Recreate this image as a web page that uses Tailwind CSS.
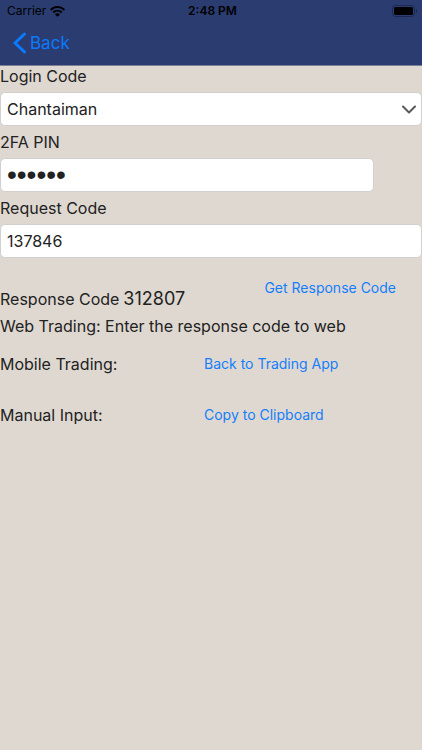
<!DOCTYPE html>
<html lang="en">
<head>
<meta charset="utf-8">
<meta name="viewport" content="width=device-width, initial-scale=1">
<title>Response Code</title>
<script src="https://cdn.jsdelivr.net/npm/@tailwindcss/browser@4"></script>
</head>
<body class="min-h-screen bg-[#dfd8d1] font-['Inter',sans-serif] text-base leading-5 text-[#222222]">
<header class="border-b border-[#7a7f98] bg-[#2a3c70]">
  <div class="grid h-[22px] grid-cols-3 items-center pr-1 pl-[7px] text-xs text-black">
    <div class="flex items-center gap-1">
      <span>Carrier</span>
      <svg class="h-[11px] w-[15px]" viewBox="0 0 15 11" fill="currentColor" aria-hidden="true">
        <path d="M7.5 0C4.7 0 2.1 1.1.2 2.9c-.2.2-.2.4 0 .6l.9.9c.2.2.4.2.6 0A8.300 8.300 0 0 1 7.500 2.100c2.200 0 4.200.8 5.800 2.300.2.200.4.200.6 0l.9-.9c.2-.2.2-.4 0-.6A10.600 10.600 0 0 0 7.500 0z"/>
        <path d="M7.500 3.700c-1.800 0-3.500.7-4.700 1.800-.2.200-.2.400 0 .6l.9.9c.2.200.4.200.6 0a4.700 4.700 0 0 1 6.400 0c.2.200.4.200.6 0l.9-.9c.2-.2.2-.4 0-.6a7 7 0 0 0-4.700-1.800z"/>
        <path d="M7.500 7.300c-.8 0-1.600.3-2.200.8-.2.200-.2.400 0 .6l1.900 1.900c.2.200.4.200.6 0l1.900-1.900c.2-.2.2-.4 0-.6-.6-.5-1.400-.8-2.200-.8z"/>
      </svg>
    </div>
    <time class="text-center font-semibold">2:48 PM</time>
    <svg class="h-3 w-[26px] justify-self-end" viewBox="0 0 26 12" aria-label="Battery full" role="img">
      <rect x=".5" y=".5" width="22" height="11" rx="3" fill="none" stroke="#1c2850"/>
      <rect x="2" y="2" width="19" height="8" rx="1.500" fill="#000"/>
      <path d="M24 4v4c.8-.3 1.300-1.100 1.300-2S24.800 4.300 24 4z" fill="#1c2850"/>
    </svg>
  </div>
  <nav class="flex h-[43px] items-center pb-0.5 pl-3">
    <a href="#" class="flex items-center gap-1 text-[17px] text-[#0a7aff]">
      <svg class="h-[22px] w-[14px]" viewBox="0 0 14 22" fill="none" stroke="currentColor" stroke-width="3" stroke-linecap="round" stroke-linejoin="round" aria-hidden="true"><path d="M12.500 2 3 11l9.500 9"/></svg>
      <span>Back</span>
    </a>
  </nav>
</header>
<main>
  <form class="flex flex-col gap-[6px]">
    <label for="login">Login Code</label>
    <div class="relative">
      <select id="login" class="block h-[34px] w-full appearance-none rounded-[5px] border border-[#d3cfcc] bg-white px-[6px]">
        <option>Chantaiman</option>
      </select>
      <svg class="pointer-events-none absolute top-[13px] right-[6px] h-[9px] w-[14px]" viewBox="0 0 14 9" fill="none" stroke="#595959" stroke-width="2" stroke-linecap="round" stroke-linejoin="round" aria-hidden="true"><path d="M1 1.500 7 7.500l6-6"/></svg>
    </div>
    <label for="pin">2FA PIN</label>
    <input id="pin" type="password" value="123456" class="mr-12 h-[34px] rounded-[5px] border border-[#d3cfcc] bg-white px-[6px] font-['Liberation_Sans',sans-serif] text-[28px]">
    <label for="request">Request Code</label>
    <input id="request" type="text" value="137846" class="h-[34px] rounded-[5px] border border-[#d3cfcc] bg-white px-[6px]">
    <div class="flex items-start justify-between pt-[14px] pr-[26px]">
      <p class="flex items-baseline gap-1 pt-[11px]">
        <label for="response">Response Code</label>
        <output id="response" class="text-lg leading-5">312807</output>
      </p>
      <button type="button" class="text-sm leading-5 text-[#147efb]">Get Response Code</button>
    </div>
  </form>
  <p class="pt-[7px]">Web Trading: Enter the response code to web</p>
  <div class="grid grid-cols-[204px_1fr] items-center gap-y-[31px] pt-[18px]">
    <p>Mobile Trading:</p>
    <button type="button" class="justify-self-start text-sm leading-5 text-[#147efb]">Back to Trading App</button>
    <p>Manual Input:</p>
    <button type="button" class="justify-self-start text-sm leading-5 text-[#147efb]">Copy to Clipboard</button>
  </div>
</main>
</body>
</html>
